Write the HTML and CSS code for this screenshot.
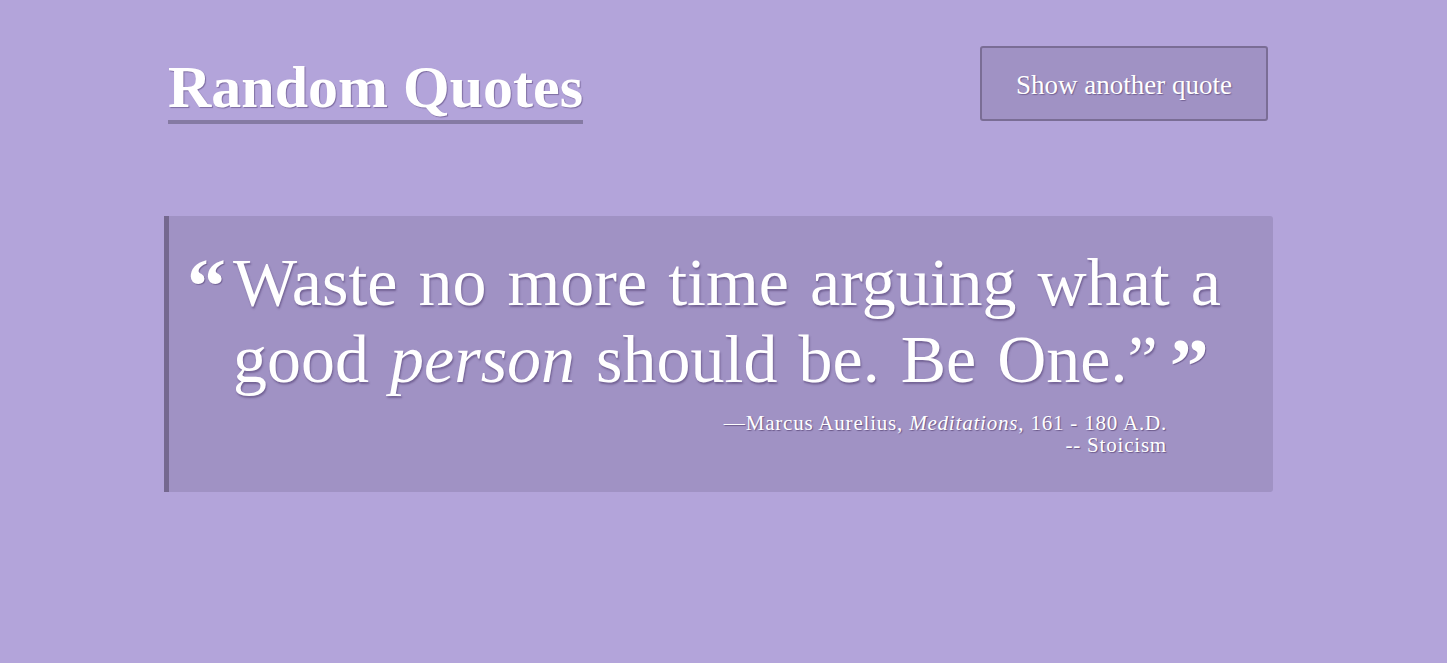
FILE: index.html
```html
<!DOCTYPE html>
<html lang="en">
<head>
<meta charset="utf-8">
<title>Random Quotes</title>
<link rel="stylesheet" href="styles.css">
</head>
<body>
<div class="page">
  <header class="header">
    <h1 class="title">Random Quotes</h1>
    <button class="btn" type="button">Show another quote</button>
  </header>
  <blockquote class="quote">
    <div class="quote-row">
      <span class="mark mark-open">&ldquo;</span>
      <p class="quote-text">Waste no more time arguing what a good <em>person</em> should be. Be One.&rdquo;<span class="mark mark-close">&rdquo;</span></p>
    </div>
    <footer class="cite">
      <div>&mdash;Marcus Aurelius, <em>Meditations</em>, 161 - 180 A.D.</div>
      <div>-- Stoicism</div>
    </footer>
  </blockquote>
</div>
</body>
</html>
```

FILE: styles.css
```css
html, body {
  margin: 0;
  padding: 0;
}
body {
  background: #b3a4da;
  font-family: "Liberation Serif", "DejaVu Serif", serif;
  color: #fff;
  min-height: 663px;
}
.page {
  width: 1109px;
  margin-left: 164px;
  padding-top: 46px;
}
.header {
  display: flex;
  justify-content: space-between;
  align-items: flex-start;
  padding: 0 5px 0 4px;
}
.title {
  margin: 8px 0 0 0;
  font-size: 60px;
  font-weight: bold;
  line-height: 66px;
  border-bottom: 4px solid #857aa3;
  text-shadow: 1px 1px 1px rgba(60, 40, 90, 0.45);
}
.btn {
  width: 288px;
  height: 75px;
  background: #a092c4;
  border: 2px solid #7a6d95;
  border-radius: 3px;
  color: #fff;
  font-family: inherit;
  font-size: 27px;
  text-shadow: 1px 1px 1px rgba(60, 40, 90, 0.45);
  padding: 4px 0 0 0;
}
.quote {
  margin: 92px 0 0 0;
  background: #a092c4;
  border-left: 5px solid #75688f;
  border-radius: 0 3px 3px 0;
  height: 276px;
  box-sizing: border-box;
  padding: 28px 0 0 19px;
}
.quote-row {
  display: flex;
  align-items: flex-start;
}
.mark {
  font-weight: bold;
  text-shadow: 1px 1px 1px rgba(60, 40, 90, 0.45);
}
.mark-open {
  font-size: 78px;
  line-height: 78px;
  width: 46px;
  flex: none;
  margin-top: 3px;
  margin-left: -1px;
}
.mark-close {
  font-size: 78px;
  line-height: 0;
  margin-left: 12px;
  vertical-align: -10px;
}
.quote-text {
  margin: 0;
  font-size: 68px;
  line-height: 77px;
  word-spacing: 4px;
  text-shadow: 1px 2px 2px rgba(60, 40, 90, 0.45);
}
.cite {
  width: 979px;
  margin-top: 14px;
  text-align: right;
  font-size: 21px;
  line-height: 22px;
  letter-spacing: 0.8px;
  text-shadow: 1px 1px 1px rgba(60, 40, 90, 0.55);
}
```
